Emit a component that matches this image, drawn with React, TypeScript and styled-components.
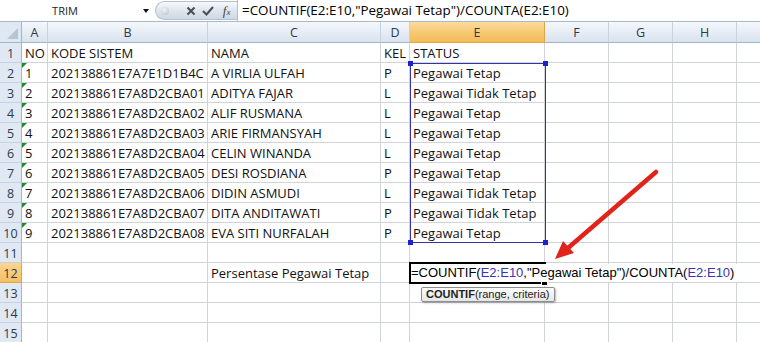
import styled, { createGlobalStyle } from 'styled-components';

const GlobalStyle = createGlobalStyle`
  html, body { margin: 0; padding: 0; background: #fff; }
  body { width: 760px; height: 342px; overflow: hidden; font-family: "Open Sans", "Noto Sans", sans-serif; }
`;

const Page = styled.div`
  width: 760px;
  height: 342px;
  overflow: hidden;
  background: #fff;
`;

const FormulaBar = styled.div`
  display: flex;
  align-items: stretch;
  height: 21px;
  border-bottom: 1px solid #a9b9cd;
  background: #fff;
`;

const NameBox = styled.div`
  width: 140px;
  box-sizing: border-box;
  padding-right: 10px;
  display: flex;
  align-items: center;
  justify-content: center;
  font-size: 11px;
  color: #222;
`;

const DropArrow = styled.div`
  width: 12px;
  display: flex;
  align-items: center;
  justify-content: center;
  &::after {
    content: '';
    border-left: 3px solid transparent;
    border-right: 3px solid transparent;
    border-top: 4px solid #111;
  }
`;

const Pill = styled.div`
  margin: 1px 0 1px 3px;
  width: 82px;
  box-sizing: border-box;
  display: flex;
  align-items: center;
  border: 1px solid #b4c0d0;
  border-right: none;
  border-radius: 10px 0 0 10px;
  background: linear-gradient(#f7f9fc, #dde4ee 55%, #cfd8e4);
`;

const Dot = styled.span`
  width: 8px;
  height: 8px;
  margin: 0 14px 0 5px;
  border-radius: 50%;
  background: radial-gradient(circle at 40% 35%, #f4f4f4, #b9bec6);
`;

const IconBtn = styled.span`
  width: 18px;
  display: flex;
  align-items: center;
  justify-content: center;
`;

const Fx = styled.span`
  width: 22px;
  text-align: center;
  font-family: "Liberation Serif", serif;
  font-style: italic;
  font-size: 13px;
  color: #444;
  sub {
    font-size: 9px;
    vertical-align: 0;
  }
`;

const FormulaInput = styled.div`
  flex: 1;
  border-left: 1px solid #b4c0d0;
  padding-left: 4px;
  font-size: 13.4px;
  line-height: 21px;
  color: #000;
  white-space: nowrap;
`;

const Sheet = styled.div`
  position: relative;
  display: grid;
  grid-template-columns: 22px 26px 160px 173px 29px 135px 64px 64px 64px 64px;
  grid-template-rows: 21px;
  grid-auto-rows: 20px;
`;

const ColHead = styled.div<{ $on?: boolean }>`
  box-sizing: border-box;
  display: flex;
  align-items: center;
  justify-content: center;
  font-size: 12.5px;
  color: #2b3a4d;
  border-right: 1px solid ${(p) => (p.$on ? '#e0a645' : '#c5d2e2')};
  border-bottom: 1px solid ${(p) => (p.$on ? '#e0a645' : '#9eb6ce')};
  background: ${(p) =>
    p.$on ? 'linear-gradient(#fbdc9e, #f6c66c 60%, #f3bb5c)' : 'linear-gradient(#f5f8fc, #e4ebf4 60%, #d9e2ee)'};
`;

const Corner = styled.div`
  box-sizing: border-box;
  border-right: 1px solid #9eb6ce;
  border-bottom: 1px solid #9eb6ce;
  background: #dfe7f2;
  display: flex;
  align-items: flex-end;
  justify-content: flex-end;
  padding: 0 3px 3px 0;
  &::after {
    content: '';
    border-left: 11px solid transparent;
    border-bottom: 11px solid #b6c4d6;
  }
`;

const RowHead = styled.div<{ $on?: boolean }>`
  box-sizing: border-box;
  display: flex;
  align-items: center;
  justify-content: center;
  padding-top: 1px;
  font-size: 12.5px;
  color: #2b3a4d;
  border-right: 1px solid ${(p) => (p.$on ? '#e0a645' : '#9eb6ce')};
  border-bottom: 1px solid ${(p) => (p.$on ? '#e0a645' : '#c5d2e2')};
  background: ${(p) => (p.$on ? 'linear-gradient(#fbd590, #f5c064)' : '#e0e8f3')};
`;

const Cell = styled.div<{ $flag?: boolean }>`
  position: relative;
  box-sizing: border-box;
  border-right: 1px solid #d0d3d8;
  border-bottom: 1px solid #d0d3d8;
  padding: 1px 3px 0;
  font-size: 13px;
  line-height: 19px;
  color: #111;
  white-space: nowrap;
  overflow: visible;
  &::before {
    content: '';
    display: ${(p) => (p.$flag ? 'block' : 'none')};
    position: absolute;
    left: 0;
    top: 0;
    border-top: 5px solid #1f8a2a;
    border-right: 5px solid transparent;
  }
`;

const Selection = styled.div`
  position: absolute;
  left: 410px;
  top: 41px;
  width: 136px;
  height: 180px;
  box-sizing: border-box;
  border: 1px solid #3434a8;
  pointer-events: none;
`;

const Handle = styled.span<{ $x: 'l' | 'r'; $y: 't' | 'b' }>`
  position: absolute;
  width: 5px;
  height: 5px;
  background: #1c22d0;
  ${(p) => (p.$x === 'l' ? 'left: -3px;' : 'right: -3px;')}
  ${(p) => (p.$y === 't' ? 'top: -3px;' : 'bottom: -3px;')}
`;

const ActiveCell = styled.div`
  position: absolute;
  left: 409px;
  top: 240px;
  width: 137px;
  height: 22px;
  box-sizing: border-box;
  border: 2px solid #000;
  border-right: none;
`;

const FillHandle = styled.span`
  position: absolute;
  right: -2px;
  bottom: -4px;
  width: 5px;
  height: 5px;
  background: #000;
  border: 1px solid #fff;
`;

const Editor = styled.div`
  position: absolute;
  left: 411px;
  top: 242px;
  height: 18px;
  padding-right: 4px;
  background: #fff;
  font-family: "Liberation Sans", Arial, sans-serif;
  font-size: 13px;
  line-height: 18px;
  color: #000;
  white-space: nowrap;
`;

const Ref = styled.span`
  color: #3a35b4;
`;

const Tip = styled.div`
  position: absolute;
  left: 421px;
  top: 265px;
  height: 15px;
  box-sizing: border-box;
  padding: 0 5px 0 4px;
  border: 1px solid #8c8c8c;
  border-radius: 2px;
  background: linear-gradient(#fdfdfd, #e6e6e6);
  box-shadow: 1px 1px 2px rgba(0, 0, 0, 0.3);
  font-family: "Liberation Sans", Arial, sans-serif;
  font-size: 11px;
  line-height: 13px;
  color: #222;
  white-space: nowrap;
  b { font-weight: bold; }
`;

const Arrow = styled.svg`
  position: absolute;
  left: 520px;
  top: 118px;
  overflow: visible;
`;

const cols = ['A', 'B', 'C', 'D', 'E', 'F', 'G', 'H', 'I'];

const codes = ['202138861E7A7E1D1B4C', ...[1, 2, 3, 4, 5, 6, 7, 8].map((n) => `202138861E7A8D2CBA0${n}`)];
const names = [
  'A VIRLIA ULFAH',
  'ADITYA FAJAR',
  'ALIF RUSMANA',
  'ARIE FIRMANSYAH',
  'CELIN WINANDA',
  'DESI ROSDIANA',
  'DIDIN ASMUDI',
  'DITA ANDITAWATI',
  'EVA SITI NURFALAH',
];
const kel = ['P', 'L', 'L', 'L', 'L', 'P', 'L', 'P', 'P'];
const status = ['T', 'TT', 'T', 'T', 'T', 'T', 'TT', 'TT', 'T'].map((s) =>
  s === 'T' ? 'Pegawai Tetap' : 'Pegawai Tidak Tetap',
);

const rows: string[][] = [
  ['NO', 'KODE SISTEM', 'NAMA', 'KEL', 'STATUS', '', '', '', ''],
  ...names.map((n, i) => [String(i + 1), codes[i], n, kel[i], status[i], '', '', '', '']),
  ['', '', '', '', '', '', '', '', ''],
  ['', '', 'Persentase Pegawai Tetap', '', '', '', '', '', ''],
  ['', '', '', '', '', '', '', '', ''],
  ['', '', '', '', '', '', '', '', ''],
  ['', '', '', '', '', '', '', '', ''],
];

export default function App() {
  return (
    <Page>
      <GlobalStyle />
      <FormulaBar>
        <NameBox>TRIM</NameBox>
        <DropArrow />
        <Pill>
          <Dot />
          <IconBtn>
            <svg width="10" height="10" viewBox="0 0 10 10">
              <path d="M1.5 1.5 L8.5 8.5 M8.5 1.5 L1.5 8.5" stroke="#4d4d4d" strokeWidth="2" />
            </svg>
          </IconBtn>
          <IconBtn>
            <svg width="12" height="10" viewBox="0 0 12 10">
              <path d="M1 5 L4.5 8.5 L11 1" stroke="#4d4d4d" strokeWidth="2" fill="none" />
            </svg>
          </IconBtn>
          <Fx>
            f<sub>x</sub>
          </Fx>
        </Pill>
        <FormulaInput>=COUNTIF(E2:E10,"Pegawai Tetap")/COUNTA(E2:E10)</FormulaInput>
      </FormulaBar>
      <Sheet>
        <Corner />
        {cols.map((c) => (
          <ColHead key={c} $on={c === 'E'}>
            {c}
          </ColHead>
        ))}
        {rows.map((r, i) => [
          <RowHead key={`h${i}`} $on={i === 11}>
            {i + 1}
          </RowHead>,
          ...r.map((v, j) => (
            <Cell key={`${i}-${j}`} $flag={j === 0 && i >= 1 && i <= 9}>
              {v}
            </Cell>
          )),
        ])}
        <Selection>
          <Handle $x="l" $y="t" />
          <Handle $x="r" $y="t" />
          <Handle $x="l" $y="b" />
          <Handle $x="r" $y="b" />
        </Selection>
        <ActiveCell>
          <FillHandle />
        </ActiveCell>
        <Editor>
          =COUNTIF(<Ref>E2:E10</Ref>,"Pegawai Tetap")/COUNTA(<Ref>E2:E10</Ref>)
        </Editor>
        <Tip>
          <b>COUNTIF</b>(range, criteria)
        </Tip>
        <Arrow width="150" height="130" viewBox="0 0 150 130">
          <line x1="136" y1="32" x2="48" y2="108" stroke="#e2231a" strokeWidth="4.5" strokeLinecap="round" />
          <polygon points="35,119 43,101 54,113" fill="#e2231a" />
        </Arrow>
      </Sheet>
    </Page>
  );
}
